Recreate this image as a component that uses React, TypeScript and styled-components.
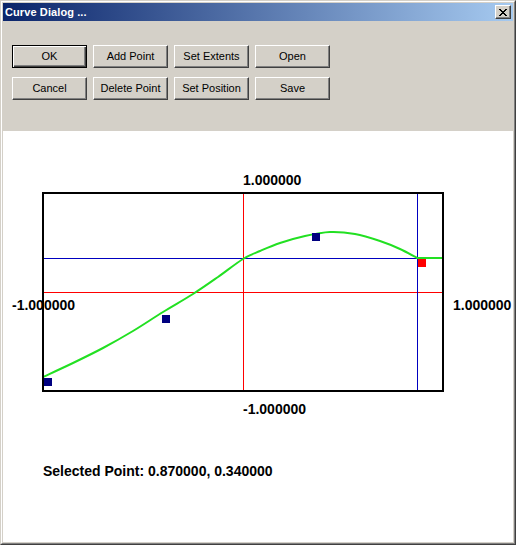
import React from 'react';
import styled, { createGlobalStyle } from 'styled-components';

const GlobalStyle = createGlobalStyle`
    html, body {
        margin: 0;
        padding: 0;
        background: #d4d0c8;
    }
    body {
        font-family: "Liberation Sans", Arial, sans-serif;
    }
`

const Window = styled.div`
    width: 516px;
    height: 545px;
    box-sizing: border-box;
    display: flex;
    border: 1px solid;
    border-color: #d4d0c8 #404040 #404040 #d4d0c8;
    background: #d4d0c8;
`

const Frame = styled.div`
    flex: 1;
    display: flex;
    flex-direction: column;
    border: 1px solid;
    border-color: #ffffff #808080 #808080 #ffffff;
    padding: 1px;
`

const TitleBar = styled.div`
    height: 18px;
    display: flex;
    align-items: center;
    justify-content: space-between;
    padding: 0 2px;
    background: linear-gradient(90deg, #0a246a 0%, #a6caf0 100%);
`

const TitleText = styled.span`
    color: #fff;
    font-weight: bold;
    font-size: 11px;
    letter-spacing: 0.1px;
`

const CloseButton = styled.button`
    width: 16px;
    height: 14px;
    padding: 0;
    box-sizing: border-box;
    display: flex;
    align-items: center;
    justify-content: center;
    background: #d4d0c8;
    border: 1px solid;
    border-color: #ffffff #404040 #404040 #ffffff;
    box-shadow: inset -1px -1px #808080;
`

const Toolbar = styled.div`
    height: 110px;
    box-sizing: border-box;
    padding: 24px 0 0 9px;
    display: grid;
    grid-template-columns: repeat(4, 75px);
    grid-auto-rows: 23px;
    column-gap: 6px;
    row-gap: 9px;
    align-content: start;
`

const Button = styled.button<{ $default?: boolean }>`
    height: 23px;
    width: 75px;
    box-sizing: border-box;
    padding: 0 0 1px;
    background: #d4d0c8;
    font-family: "Liberation Sans", Arial, sans-serif;
    font-size: 11px;
    color: #000;
    border: 1px solid;
    border-color: ${p => p.$default ? '#000' : '#ffffff #404040 #404040 #ffffff'};
    box-shadow: ${p => p.$default
        ? 'inset 1px 1px #ffffff, inset -1px -1px #404040, inset -2px -2px #808080'
        : 'inset -1px -1px #808080'};
`

const Canvas = styled.div`
    flex: 1;
    background: #fff;
    display: flex;
    flex-direction: column;
`

const Plot = styled.svg`
    display: block;
    margin-top: 39px;
    font-family: "Liberation Sans", Arial, sans-serif;
    font-weight: bold;
    font-size: 14px;
`

const Status = styled.div`
    margin: 43px 0 0 40px;
    font-size: 14px;
    line-height: 16px;
    font-weight: bold;
    color: #000;
`

// curve samples in page pixels
const curve: [number, number][] = [
    [43, 377], [73, 363], [103, 348], [133, 331], [163, 312], [193, 294],
    [218, 277], [243, 259], [260, 251], [280, 243], [305, 236], [330, 232],
    [355, 234], [380, 241], [400, 249], [417, 258],
]

const smooth = (pts: [number, number][]) => {
    let d = `M${pts[0][0]},${pts[0][1]}`
    for (let i = 0; i < pts.length - 1; i++) {
        const p0 = pts[i - 1] || pts[i]
        const p1 = pts[i]
        const p2 = pts[i + 1]
        const p3 = pts[i + 2] || p2
        const c1x = p1[0] + (p2[0] - p0[0]) / 6
        const c1y = p1[1] + (p2[1] - p0[1]) / 6
        const c2x = p2[0] - (p3[0] - p1[0]) / 6
        const c2y = p2[1] - (p3[1] - p1[1]) / 6
        d += ` C${c1x},${c1y} ${c2x},${c2y} ${p2[0]},${p2[1]}`
    }
    return d
}

const points = [
    { x: 43, y: 377, sel: false },
    { x: 161, y: 314, sel: false },
    { x: 311, y: 232, sel: false },
    { x: 417, y: 258, sel: true },
]

const labels = ['OK', 'Add Point', 'Set Extents', 'Open', 'Cancel', 'Delete Point', 'Set Position', 'Save']

const App: React.FC = () => {
    return (
        <>
        <GlobalStyle />
        <Window>
            <Frame>
                <TitleBar>
                    <TitleText>Curve Dialog ...</TitleText>
                    <CloseButton aria-label="Close">
                        <svg width="8" height="7" viewBox="0 0 8 7" shapeRendering="crispEdges">
                            <path d="M0 0h2v1h-2zM1 1h2v1h-2zM2 2h4v1h-4zM3 3h2v1h-2zM2 4h4v1h-4zM1 5h2v1h-2zM0 6h2v1h-2zM6 0h2v1h-2zM5 1h2v1h-2zM5 5h2v1h-2zM6 6h2v1h-2z" fill="#000" />
                        </svg>
                    </CloseButton>
                </TitleBar>
                <Toolbar>
                    {labels.map((l, i) => (
                        <Button key={l} $default={i === 0}>{l}</Button>
                    ))}
                </Toolbar>
                <Canvas>
                    <Plot width="510" height="250" viewBox="3 170 510 250">
                        <text x="243" y="185">1.000000</text>
                        <text x="12" y="310">-1.000000</text>
                        <text x="453" y="310">1.000000</text>
                        <text x="243" y="414">-1.000000</text>
                        <g shapeRendering="crispEdges">
                            <rect x="243" y="193" width="1" height="198" fill="#ff0000" />
                            <rect x="43" y="292" width="400" height="1" fill="#ff0000" />
                            <rect x="43" y="258" width="400" height="1" fill="#0000c0" />
                            <rect x="417" y="193" width="1" height="198" fill="#0000c0" />
                        </g>
                        <path d={smooth(curve) + ' L443,258'} fill="none" stroke="#22e022" strokeWidth="2" />
                        <rect x="43" y="193" width="400" height="198" fill="none" stroke="#000" strokeWidth="2" shapeRendering="crispEdges" />
                        {points.map(p => (
                            <rect key={p.x} x={p.x + 1} y={p.y + 1} width="8" height="8"
                                fill={p.sel ? '#ff0000' : '#000080'} shapeRendering="crispEdges" />
                        ))}
                    </Plot>
                    <Status>Selected Point: 0.870000, 0.340000</Status>
                </Canvas>
            </Frame>
        </Window>
        </>
    );
}

export default App;
